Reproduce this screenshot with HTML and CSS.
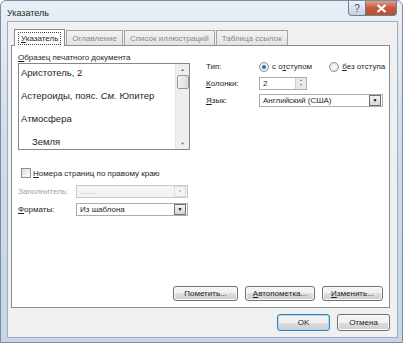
FILE: index.html
```html
<!DOCTYPE html>
<html lang="ru">
<head>
    <meta charset="UTF-8">
    <title>Указатель</title>
    <link rel="stylesheet" href="styles.css">
</head>
<body>
    <div class="window">
        <div class="titlebar">
            <span class="title">Указатель</span>
            <div class="caption">
                <span class="cap-btn help">?</span>
                <span class="cap-btn close">
                    <svg width="11" height="9" viewBox="0 0 11 9"><path d="M1.5 1 L9.5 8 M9.5 1 L1.5 8" stroke="#fff" stroke-width="2.2"/></svg>
                </span>
            </div>
        </div>

        <div class="client">
            <div class="tabs">
                <span class="tab active"><span class="focus"><u>У</u>казатель</span></span>
                <span class="tab">Оглавление</span>
                <span class="tab">Список иллюстраций</span>
                <span class="tab">Таблица ссылок</span>
            </div>

            <div class="panel">
                <div class="top">
                    <div class="left">
                        <div class="caption-label"><u>О</u>бразец печатного документа</div>
                        <div class="preview">
                            <div class="items">
                                <div class="item">Аристотель, 2</div>
                                <div class="item">Астероиды, пояс. <i>См.</i> Юпитер</div>
                                <div class="item">Атмосфера</div>
                                <div class="item sub">Земля</div>
                            </div>
                            <div class="vscroll">
                                <span class="arrow">&#9650;</span>
                                <span class="thumb"></span>
                                <span class="track"></span>
                                <span class="arrow">&#9660;</span>
                            </div>
                        </div>
                    </div>

                    <div class="right">
                        <div class="row">
                            <span class="lbl">Тип:</span>
                            <label class="radio"><span class="dot on"></span><span>с о<u>т</u>ступом</span></label>
                            <label class="radio"><span class="dot"></span><span><u>б</u>ез отступа</span></label>
                        </div>
                        <div class="row">
                            <span class="lbl"><u>К</u>олонки:</span>
                            <div class="spin">
                                <span class="value">2</span>
                                <span class="spin-btns"><span>&#9650;</span><span>&#9660;</span></span>
                            </div>
                        </div>
                        <div class="row">
                            <span class="lbl"><u>Я</u>зык:</span>
                            <div class="combo wide">
                                <span class="value">Английский (США)</span>
                                <span class="drop">&#9660;</span>
                            </div>
                        </div>
                    </div>
                </div>

                <div class="options">
                    <label class="check"><span class="box"></span><span><u>Н</u>омера страниц по правому краю</span></label>
                    <div class="row disabled">
                        <span class="lbl2">Заполнитель:</span>
                        <div class="combo">
                            <span class="value">.......</span>
                            <span class="drop">&#9660;</span>
                        </div>
                    </div>
                    <div class="row">
                        <span class="lbl2"><u>Ф</u>орматы:</span>
                        <div class="combo">
                            <span class="value">Из шаблона</span>
                            <span class="drop">&#9660;</span>
                        </div>
                    </div>
                </div>

                <div class="panel-buttons">
                    <button class="btn mark">Пометить...</button>
                    <button class="btn auto"><u>А</u>втопометка...</button>
                    <button class="btn edit"><u>И</u>зменить...</button>
                </div>
            </div>

            <div class="footer">
                <button class="btn default">OK</button>
                <button class="btn">Отмена</button>
            </div>
        </div>
    </div>
</body>
</html>
```

FILE: styles.css
```css
body {
    margin: 0;
    font-family: "Liberation Sans", Arial, sans-serif;
    font-size: 8px;
    color: #1e1e1e;
}
.window {
    width: 403px;
    height: 343px;
    box-sizing: border-box;
    background: linear-gradient(#e9eff6, #cfdceb 40%, #c6d6e8);
    border: 1px solid #7f8b98;
    border-radius: 6px 6px 0 0;
    display: flex;
    flex-direction: column;
}
.titlebar {
    height: 20px;
    display: flex;
    align-items: flex-start;
    justify-content: space-between;
    padding-left: 6px;
    padding-right: 5px;
}
.title {
    font-size: 9px;
    margin-top: 7px;
}
.caption {
    display: flex;
}
.cap-btn {
    height: 14px;
    display: flex;
    align-items: center;
    justify-content: center;
    border: 1px solid #6f7f92;
    border-top: none;
}
.help {
    width: 16px;
    background: linear-gradient(#edf2f8, #c5d2e0);
    color: #3f4f63;
    font-size: 10px;
    border-radius: 0 0 0 4px;
}
.close {
    width: 30px;
    background: linear-gradient(#dba38e, #c25a3e 50%, #b74e30);
    border-left: none;
    border-radius: 0 0 4px 0;
}
.client {
    flex: 1;
    margin: 0 4px 4px 6px;
    background: #f0f0f0;
    border: 1px solid #a0acba;
    display: flex;
    flex-direction: column;
}
.tabs {
    display: flex;
    padding: 6px 0 0 6px;
    height: 17px;
    align-items: flex-end;
}
.tab {
    height: 14px;
    padding: 0 5px;
    display: flex;
    align-items: center;
    border: 1px solid #a5a5a5;
    border-bottom: none;
    background: linear-gradient(#f2f2f2, #e3e3e3);
    color: #8a8a8a;
    margin-right: 1px;
    white-space: nowrap;
}
.tab.active {
    height: 16px;
    background: #fff;
    color: #1e1e1e;
    border-color: #898c95;
    margin-bottom: -1px;
    position: relative;
    z-index: 1;
    padding: 0 3px;
}
.focus {
    border: 1px dotted #444;
    padding: 1px 2px;
}
.panel {
    margin: 0 7px 0 3px;
    height: 261px;
    background: #fff;
    border: 1px solid #898c95;
    display: flex;
    flex-direction: column;
    padding: 0 6px 0 6px;
}
.top {
    display: flex;
    margin-top: 6px;
}
.left {
    flex: none;
    width: 172px;
}
.caption-label {
    height: 11px;
    line-height: 11px;
}
.preview {
    height: 85px;
    border: 1px solid #828790;
    display: flex;
    overflow: hidden;
}
.items {
    flex: 1;
    padding: 2px 0 0 2px;
    font-size: 9.5px;
    white-space: nowrap;
    overflow: hidden;
}
.item {
    height: 23px;
    line-height: 14px;
}
.item.sub {
    padding-left: 11px;
}
.vscroll {
    width: 13px;
    background: #eee;
    display: flex;
    flex-direction: column;
    align-items: center;
    border-left: 1px solid #e6e6e6;
}
.arrow {
    font-size: 4px;
    color: #555;
    height: 11px;
    line-height: 11px;
}
.thumb {
    width: 10px;
    height: 12px;
    border: 1px solid #979797;
    border-radius: 2px;
    background: linear-gradient(90deg, #f3f3f3, #dcdcdc);
}
.track {
    flex: 1;
}
.right {
    margin-left: 16px;
    padding-top: 6px;
    flex: 1;
}
.row {
    display: flex;
    align-items: center;
    height: 17px;
    white-space: nowrap;
}
.lbl {
    width: 53px;
}
.radio {
    display: flex;
    align-items: center;
    margin-right: 17px;
}
.dot {
    width: 8px;
    height: 8px;
    border: 1px solid #8a9099;
    border-radius: 50%;
    background: radial-gradient(#ffffff, #d8dde3);
    margin-right: 3px;
    position: relative;
}
.dot.on::after {
    content: "";
    position: absolute;
    left: 2px;
    top: 2px;
    width: 4px;
    height: 4px;
    border-radius: 50%;
    background: #2b6fb4;
}
.spin {
    width: 46px;
    height: 11px;
    border: 1px solid #abadb3;
    display: flex;
    align-items: center;
}
.value {
    flex: 1;
    padding-left: 3px;
    white-space: nowrap;
    overflow: hidden;
}
.spin-btns {
    width: 10px;
    height: 11px;
    display: flex;
    flex-direction: column;
    font-size: 3px;
    color: #666;
    text-align: center;
    line-height: 5px;
    background: #eaeaea;
    border-left: 1px solid #cfcfcf;
}
.combo {
    width: 110px;
    height: 11px;
    border: 1px solid #abadb3;
    display: flex;
    align-items: center;
    background: #fff;
}
.combo.wide {
    width: 122px;
}
.drop {
    width: 10px;
    height: 9px;
    margin-right: 1px;
    border: 1px solid #707070;
    background: linear-gradient(#f2f2f2, #d6d6d6);
    font-size: 5px;
    line-height: 9px;
    text-align: center;
    color: #000;
}
.options {
    margin-top: 17px;
}
.check {
    display: flex;
    align-items: center;
    height: 12px;
    margin-left: 3px;
    margin-bottom: 3px;
    white-space: nowrap;
}
.box {
    width: 8px;
    height: 8px;
    border: 1px solid #8f8f8f;
    background: linear-gradient(135deg, #dcdcdc, #fff);
    margin-right: 2px;
}
.lbl2 {
    width: 58px;
}
.options .row {
    height: 18px;
}
.disabled {
    color: #a0a0a0;
}
.disabled .combo {
    background: #f4f4f4;
    border-color: #c9c9c9;
}
.disabled .drop {
    border-color: #dadada;
    color: #bdbdbd;
    background: #f4f4f4;
}
.panel-buttons {
    margin-top: auto;
    margin-bottom: 6px;
    display: flex;
    justify-content: flex-end;
    gap: 7px;
}
.btn {
    height: 15px;
    padding: 0 6px;
    font-family: "Liberation Sans", Arial, sans-serif;
    font-size: 8px;
    color: #1e1e1e;
    border: 1px solid #707070;
    border-radius: 3px;
    background: linear-gradient(#f2f2f2 50%, #dddddd 50%, #cfcfcf);
    box-shadow: inset 0 0 0 1px #fcfcfc;
}
.btn.mark {
    width: 65px;
}
.btn.auto {
    width: 70px;
}
.btn.edit {
    width: 61px;
}
.footer {
    flex: 1;
    display: flex;
    justify-content: flex-end;
    align-items: center;
    gap: 7px;
    padding-right: 7px;
}
.footer .btn {
    width: 53px;
    height: 17px;
}
.btn.default {
    border-color: #3c7fb1;
    box-shadow: inset 0 0 0 1px #a3dcf6;
}
```
